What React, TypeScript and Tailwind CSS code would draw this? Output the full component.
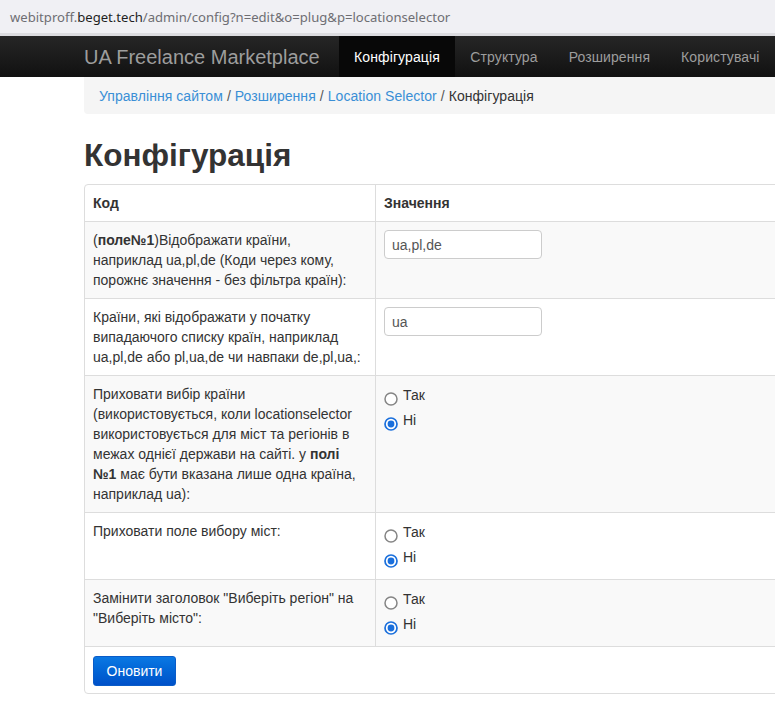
import React from "react";

// Bootstrap-like admin page: plugin configuration

const rows = [
  { kind: "input", value: "ua,pl,de" },
  { kind: "input", value: "ua" },
  { kind: "radio", value: "no" },
  { kind: "radio", value: "no" },
  { kind: "radio", value: "no" },
];

function Radio({ checked }: { checked: boolean }) {
  return (
    <svg width="14" height="14" viewBox="0 0 14 14" className="shrink-0 mt-[7px]">
      {checked ? (
        <>
          <circle cx="7" cy="7" r="6" fill="#fff" stroke="#1a6fdc" strokeWidth="1.7" />
          <circle cx="7" cy="7" r="3.4" fill="#1a6fdc" />
        </>
      ) : (
        <circle cx="7" cy="7" r="6" fill="#fff" stroke="#858585" strokeWidth="1.5" />
      )}
    </svg>
  );
}

function RadioGroup({ value }: { value: string }) {
  return (
    <div className="flex flex-col gap-[5px] pt-[1px] pb-[4px]">
      <label className="flex items-start gap-[5px] h-5 leading-5">
        <Radio checked={value === "yes"} />
        <span>Так</span>
      </label>
      <label className="flex items-start gap-[5px] h-5 leading-5">
        <Radio checked={value === "no"} />
        <span>Ні</span>
      </label>
    </div>
  );
}

function TextBox({ value }: { value: string }) {
  return (
    <input
      type="text"
      defaultValue={value}
      className="w-[158px] h-[29px] border border-[#ccc] rounded-[4px] bg-white px-[7px] text-[14px] text-[#555] outline-none"
    />
  );
}

export default function App() {
  const labels: React.ReactNode[] = [
    <>
      (<b>поле№1</b>)Відображати країни,
      <br />
      наприклад ua,pl,de (Коди через кому, порожнє значення - без фільтра країн):
    </>,
    <>Країни, які відображати у початку випадаючого списку країн, наприклад ua,pl,de або pl,ua,de чи навпаки de,pl,ua,:</>,
    <>
      Приховати вибір країни (використовується, коли locationselector використовується для міст та регіонів в межах
      однієї держави на сайті. у <b>полі</b>
      <br />
      <b>№1</b> має бути вказана лише одна країна, наприклад ua):
    </>,
    <>Приховати поле вибору міст:</>,
    <>Замінити заголовок "Виберіть регіон" на "Виберіть місто":</>,
  ];

  return (
    <div className="w-[775px] h-[722px] overflow-hidden bg-white text-[14px] leading-5 text-[#333] font-['Liberation_Sans',Arial,sans-serif]">
      {/* browser address bar */}
      <div className="h-[36px] bg-[#f0f0f4] border-b-[3px] border-[#dcdce0] pl-[10px] pt-[6px] text-[13.1px] text-[#6e6e73] font-['Noto_Sans',sans-serif] leading-[22px] whitespace-nowrap">
        webitproff.<span className="text-[#1f1f1f]">beget.tech</span>/admin/config?n=edit&amp;o=plug&amp;p=locationselector
      </div>

      {/* navbar */}
      <div className="h-[41px] bg-gradient-to-b from-[#262626] to-[#111] flex items-stretch pl-[84px]">
        <div className="text-[20px] text-[#9d9d9d] flex items-center w-[256px] whitespace-nowrap">UA Freelance Marketplace</div>
        <nav className="flex items-stretch text-[14px] whitespace-nowrap tracking-[0.1px]">
          <a className="px-[15px] flex items-center bg-[#080808] text-white">Конфігурація</a>
          <a className="px-[15.5px] flex items-center text-[#9d9d9d]">Структура</a>
          <a className="px-[15.5px] flex items-center text-[#9d9d9d]">Розширення</a>
          <a className="px-[15.5px] flex items-center text-[#9d9d9d]">Користувачі</a>
        </nav>
      </div>

      <div className="pl-[84px]">
        {/* breadcrumb */}
        <div className="h-[37px] bg-[#f5f5f5] rounded-bl-[4px] pl-[15px] flex items-center whitespace-nowrap tracking-[0.05px]">
          <a className="text-[#3a8fd6]">Управління сайтом</a>
          <span className="px-[4px] text-[#555]">/</span>
          <a className="text-[#3a8fd6]">Розширення</a>
          <span className="px-[4px] text-[#555]">/</span>
          <a className="text-[#3a8fd6]">Location Selector</a>
          <span className="px-[4px] text-[#555]">/</span>
          <span>Конфігурація</span>
        </div>

        <h1 className="text-[31.5px] font-bold leading-[40px] mt-[21px] mb-[9px] text-[#333]">Конфігурація</h1>

        {/* config table */}
        <div className="w-[740px] border border-[#ddd] rounded-[4px]">
          <div className="grid grid-cols-[291px_1fr] border-b border-[#ddd]">
            <div className="px-[8px] py-[8px] font-bold border-r border-[#ddd]">Код</div>
            <div className="px-[8px] py-[8px] font-bold">Значення</div>
          </div>
          {rows.map((r, i) => (
            <div
              key={i}
              className={`grid grid-cols-[291px_1fr] border-b border-[#ddd] ${i % 2 === 0 ? "bg-[#f9f9f9]" : "bg-white"}`}
            >
              <div className="px-[8px] py-[8px] border-r border-[#ddd]">{labels[i]}</div>
              <div className="px-[8px] py-[8px]">
                {r.kind === "input" ? <TextBox value={r.value} /> : <RadioGroup value={r.value} />}
              </div>
            </div>
          ))}
          <div className="px-[8px] pt-[9px] pb-[7px]">
            <button className="h-[30px] w-[83px] rounded-[3px] bg-gradient-to-b from-[#0b78e3] to-[#0051c9] border border-[#0a5cc8] text-white text-[14px]">
              Оновити
            </button>
          </div>
        </div>
      </div>
    </div>
  );
}
